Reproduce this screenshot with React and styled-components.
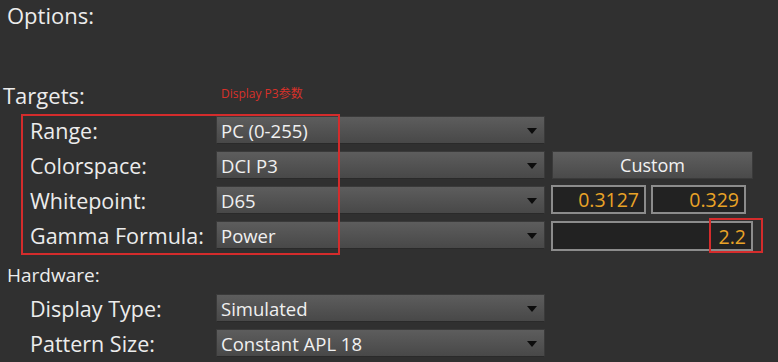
import React from "react";
import styled, { createGlobalStyle } from "styled-components";

const Global = createGlobalStyle`
  html, body {
    margin: 0;
    padding: 0;
    background: #303030;
  }
  body {
    font-family: "Open Sans", "Noto Sans CJK SC", sans-serif;
    color: #ececec;
  }
`;

const Page = styled.div`
  width: 778px;
  height: 362px;
  overflow: hidden;
  background: #303030;
`;

const Title = styled.div`
  font-size: 22px;
  line-height: 24px;
  height: 24px;
  margin-top: 3px;
  padding-left: 7px;
`;

const SectionHead = styled.div`
  display: grid;
  grid-template-columns: 216px auto;
  align-items: start;
  margin-top: ${(p) => p.$top}px;
  height: ${(p) => p.$h}px;
  font-size: ${(p) => p.$size}px;
  line-height: ${(p) => p.$h}px;
  & > span:first-child {
    padding-left: ${(p) => p.$left}px;
  }
`;

const Note = styled.span`
  padding-left: 5px;
  color: #d8302a;
  font-size: 12px;
  line-height: 14px;
  margin-top: 5px;
`;

const Group = styled.div`
  position: relative;
  display: grid;
  grid-template-columns: 210px 329px 202px;
  grid-auto-rows: 28px;
  column-gap: 6px;
  row-gap: 7px;
  margin-top: ${(p) => p.$top}px;
`;

const Label = styled.div`
  padding-left: 30px;
  font-size: 21.5px;
  display: flex;
  align-items: center;
  white-space: nowrap;
`;

const Select = styled.div`
  grid-column: 2;
  box-sizing: border-box;
  display: flex;
  align-items: center;
  justify-content: space-between;
  padding: 0 7px 0 4px;
  background: linear-gradient(#5d5d5d, #484848);
  border: 1px solid #3a3a3a;
  border-bottom-color: #2a2a2a;
  font-size: 18.5px;
  color: #f0f0f0;
`;

const Arrow = styled.span`
  width: 0;
  height: 0;
  border-left: 5px solid transparent;
  border-right: 5px solid transparent;
  border-top: 6px solid #0c0c0c;
  margin-top: 2px;
`;

const Button = styled.div`
  box-sizing: border-box;
  margin-left: 1px;
  display: flex;
  align-items: center;
  justify-content: center;
  background: linear-gradient(#5f5f5f, #4a4a4a);
  border: 1px solid #3a3a3a;
  font-size: 18px;
  color: #f2f2f2;
`;

const Pair = styled.div`
  display: grid;
  grid-template-columns: 95px 95px;
  column-gap: 5px;
  margin: -1px 0 0;
`;

const Field = styled.div`
  box-sizing: border-box;
  height: ${(p) => p.$h || 29}px;
  display: flex;
  align-items: center;
  justify-content: flex-end;
  padding-right: 5px;
  background: #222222;
  border: 2px solid #8c8c8c;
  color: #e9a227;
  font-size: 19.5px;
`;

const Mark = styled.div`
  position: absolute;
  border: 2px solid #d42c2c;
  left: ${(p) => p.$x}px;
  top: ${(p) => p.$y}px;
  width: ${(p) => p.$w}px;
  height: ${(p) => p.$h}px;
  box-sizing: border-box;
  pointer-events: none;
`;

const Empty = styled.div``;

const Row = ({ label, value, children }) => (
  <>
    <Label>{label}</Label>
    <Select>
      <span>{value}</span>
      <Arrow />
    </Select>
    {children || <Empty />}
  </>
);

export default function App() {
  return (
    <Page>
      <Global />
      <Title>Options:</Title>
      <SectionHead $top={55} $left={3} $h={26} $size={22}>
        <span>Targets:</span>
        <Note>Display P3参数</Note>
      </SectionHead>
      <Group $top={8}>
        <Row label="Range:" value="PC (0-255)" />
        <Row label="Colorspace:" value="DCI P3">
          <Button>Custom</Button>
        </Row>
        <Row label="Whitepoint:" value="D65">
          <Pair>
            <Field>0.3127</Field>
            <Field>0.329</Field>
          </Pair>
        </Row>
        <Row label="Gamma Formula:" value="Power">
          <Field $h={30}>2.2</Field>
        </Row>
        <Mark $x={21} $y={-2} $w={319} $h={141} />
        <Mark $x={709} $y={102} $w={54} $h={35} />
      </Group>
      <SectionHead $top={14} $left={7} $h={24} $size={19}>
        <span>Hardware:</span>
      </SectionHead>
      <Group $top={7}>
        <Row label="Display Type:" value="Simulated" />
        <Row label="Pattern Size:" value="Constant APL 18" />
      </Group>
    </Page>
  );
}
